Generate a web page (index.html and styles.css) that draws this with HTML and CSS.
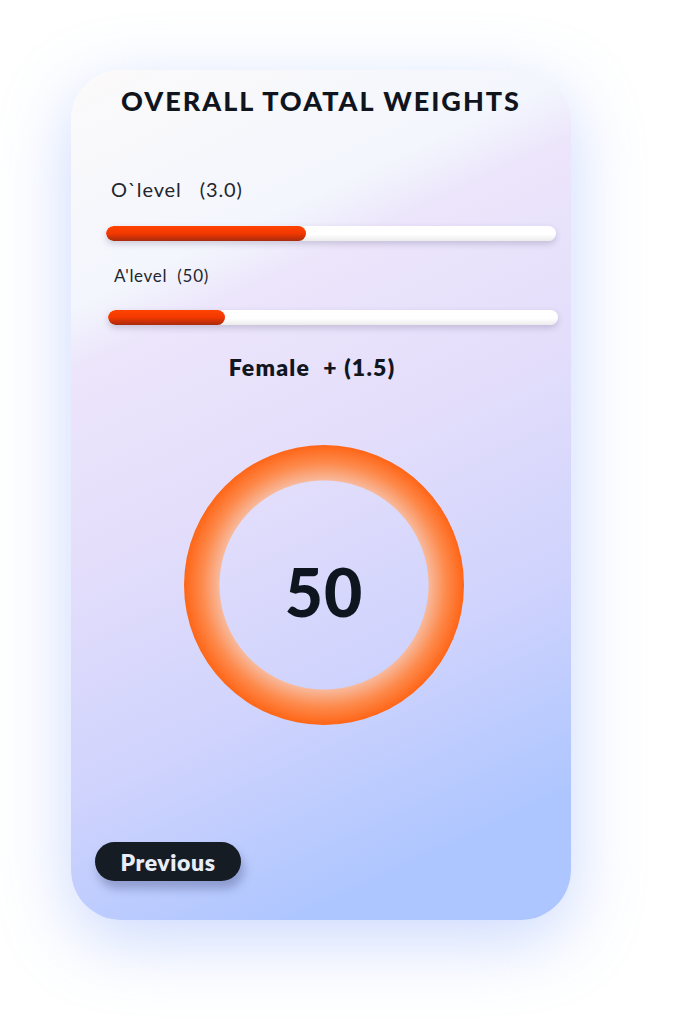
FILE: index.html
```html
<!DOCTYPE html>
<html lang="en">
  <head>
    <meta charset="UTF-8" />
    <meta name="viewport" content="width=device-width, initial-scale=1.0" />
    <title>Overall Total Weights</title>
    <link rel="stylesheet" href="styles.css">
  </head>
  <body>
    <div class="card">
      <h1 class="title">OVERALL TOATAL WEIGHTS</h1>

      <div class="level level-o">
        <div class="label">O`level &nbsp;&nbsp;(3.0)</div>
        <div class="bar"><div class="fill" style="width: 44.5%"></div></div>
      </div>

      <div class="level level-a">
        <div class="label">A'level &nbsp;(50)</div>
        <div class="bar"><div class="fill" style="width: 26%"></div></div>
      </div>

      <div class="gender">Female &nbsp;+ (1.5)</div>

      <div class="ring-wrap">
        <div class="ring">
          <span class="score">50</span>
        </div>
      </div>

      <div class="actions">
        <button class="btn-prev">Previous</button>
      </div>
    </div>
  </body>
</html>
```

FILE: styles.css
```css
* {
  margin: 0;
  padding: 0;
  box-sizing: border-box;
}

body {
  font-family: "Lato", "Noto Sans", sans-serif;
  background: #ffffff;
  width: 680px;
  height: 1030px;
  overflow: hidden;
  padding: 70px 0 0 71px;
  color: #12161f;
}

.card {
  width: 500px;
  height: 850px;
  border-radius: 50px;
  background: linear-gradient(
    155deg,
    #fcfafa 0%,
    #f3f6fd 22%,
    #ece5fb 28%,
    #e4defb 46%,
    #cfd3fd 68%,
    #aec6ff 88%,
    #aec6ff 100%
  );
  box-shadow: 0 20px 70px rgba(140, 170, 250, 0.45);
  display: flex;
  flex-direction: column;
  padding: 14px 14px 0 35px;
}

.title {
  font-size: 27px;
  font-weight: 900;
  text-align: center;
  letter-spacing: 2px;
  color: #10151d;
  line-height: 34px;
  margin-left: -21px;
}

.level .label {
  color: #23262e;
}

.level-o {
  margin-top: 59px;
}

.level-o .label {
  font-size: 20px;
  letter-spacing: 0.9px;
  padding-left: 5px;
  line-height: 24px;
}

.level-o .bar {
  margin-top: 25px;
}

.level-a {
  margin-top: 25px;
  padding-left: 2px;
}

.level-a .label {
  font-size: 17px;
  letter-spacing: 0.7px;
  padding-left: 6px;
  line-height: 20px;
}

.level-a .bar {
  margin-top: 24px;
}

.bar {
  width: 450px;
  height: 15px;
  border-radius: 8px;
  background: linear-gradient(180deg, #ffffff 55%, #ececec 100%);
  box-shadow: 0 3px 6px rgba(90, 80, 120, 0.25);
  overflow: hidden;
}

.fill {
  height: 100%;
  border-radius: 8px;
  background: linear-gradient(180deg, #ff4300 0%, #f23800 50%, #a82b0e 100%);
}

.gender {
  margin-top: 29px;
  font-size: 23px;
  font-weight: 800;
  letter-spacing: 1.2px;
  text-align: center;
  margin-right: 39px;
  line-height: 26px;
}

.ring-wrap {
  margin-top: 65px;
  display: flex;
  padding-left: 78px;
}

.ring {
  width: 280px;
  height: 280px;
  border-radius: 50%;
  background: radial-gradient(
    circle,
    transparent 104px,
    #f8b89a 105px,
    #fd8a4c 122px,
    #ff6516 140px
  );
  display: flex;
  align-items: center;
  justify-content: center;
}

.score {
  font-size: 66px;
  font-weight: 900;
  color: #0f151e;
  margin-top: 12px;
  letter-spacing: 1px;
}

.actions {
  margin-top: auto;
  margin-bottom: 39px;
  margin-left: -11px;
}

.btn-prev {
  font-family: inherit;
  background: #161c24;
  color: #e9edf8;
  border: none;
  border-radius: 20px;
  height: 39px;
  width: 146px;
  font-size: 23px;
  font-weight: 800;
  letter-spacing: 0.6px;
  box-shadow: 3px 8px 10px rgba(60, 70, 120, 0.35);
}
```
